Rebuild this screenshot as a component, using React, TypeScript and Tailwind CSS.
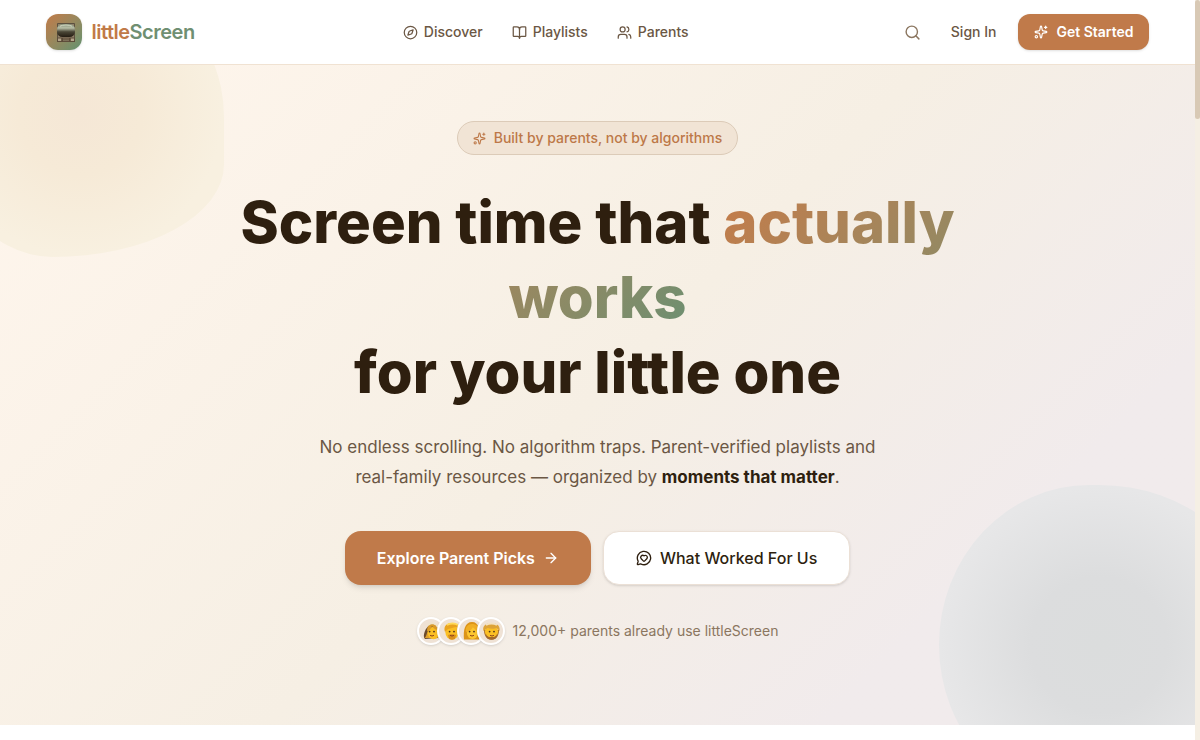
import {
  ArrowRight,
  BookOpen,
  Compass,
  MessageCircleHeart,
  Search,
  Sparkles,
  Users,
  type LucideIcon,
} from "lucide-react";

interface NavItem {
  label: string;
  href: string;
  icon: LucideIcon;
}

const NAV_ITEMS: NavItem[] = [
  { label: "Discover", href: "#discover", icon: Compass },
  { label: "Playlists", href: "#playlists", icon: BookOpen },
  { label: "Parents", href: "#parents", icon: Users },
];

type HairStyle = "bob" | "short" | "long" | "beard";

const PARENTS: HairStyle[] = ["bob", "short", "long", "beard"];

const TvLogo = () => (
  <svg viewBox="0 0 36 36" className="size-9" aria-hidden="true">
    <defs>
      <linearGradient id="tv-screen" x1="0" y1="0" x2="0" y2="1">
        <stop offset="0" stopColor="#7d8a70" />
        <stop offset="0.3" stopColor="#b9c0a8" />
        <stop offset="0.6" stopColor="#4a4636" />
        <stop offset="1" stopColor="#241c12" />
      </linearGradient>
    </defs>
    <path d="M11.5 24V9.5h17V24" stroke="#5c5140" strokeWidth="1" fill="#92826a" />
    <rect x="11" y="10" width="18" height="13" rx="5.5" fill="url(#tv-screen)" />
    <path d="M14 12.2c3-1.6 9-1.6 12 0" stroke="#d5d8c4" strokeWidth="1" fill="none" />
    <rect x="11" y="23.6" width="18" height="4.4" rx="0.6" fill="#5b4a38" />
    <rect x="12" y="24.5" width="3.2" height="2.5" fill="#b3a48a" />
    <rect x="24.8" y="24.5" width="3.2" height="2.5" fill="#b3a48a" />
    <path d="M17 25h6M17 26.6h6" stroke="#8d7d66" strokeWidth="0.8" />
  </svg>
);

const ParentFace = ({ hair }: { hair: HairStyle }) => (
  <svg viewBox="0 0 18 18" className="size-[18px] shrink-0" aria-hidden="true">
    {hair === "bob" && (
      <>
        <path d="M3 17C0 15 3 4 10 2c5 0 7 5 7 9l-1 5z" fill="#6b4a2b" />
        <path d="M2.5 16c2-1 2-5 4-8l2 8z" fill="#e0a02a" />
        <ellipse cx="11.5" cy="11" rx="5.8" ry="6.2" fill="#fbbf24" />
        <path d="M5 9c2 0 4-2 5-5 2 3 4 4 7 4-1-4-4-6-7-6-3 0-5 3-5 7z" fill="#d99a2b" />
        <path d="M6 3c3-3 8-2 10 2" stroke="#f0e4cc" strokeWidth="2" fill="none" />
      </>
    )}
    {hair === "short" && (
      <>
        <ellipse cx="10" cy="10.5" rx="6.6" ry="7" fill="#fbbf24" />
        <path d="M3 10C1 4 5 1 10 1s8 3 7 8c-1-2-2-3-3-4-3 1-5 1-8 2z" fill="#e9a31f" />
        <path d="M5 3c3-2 8-2 11 0" stroke="#ffd95a" strokeWidth="1.8" fill="none" />
        <path d="M6 13c2-1 6-1 8 0l-1 4c-2 1-4 1-6 0z" fill="#d98f1c" />
      </>
    )}
    {hair === "long" && (
      <>
        <path d="M2 17.5C1 8 3 0 10 0s8 8 7 17.5z" fill="#dc9418" />
        <ellipse cx="10.5" cy="11" rx="5.6" ry="6" fill="#fcc630" />
        <path d="M4 10c4-1 6-3 7-5 1 2 3 3 6 5 0-6-3-8-7-8s-7 3-6 8z" fill="#f0ae24" />
      </>
    )}
    {hair === "beard" && (
      <>
        <path d="M2 8c0 6 3 9.8 7.5 9.8S17 14 17 8z" fill="#a3692c" />
        <ellipse cx="9.5" cy="9.6" rx="6.6" ry="6" fill="#fbbf24" />
        <path d="M1.5 9C0 4 4 1 9.5 1s9 3 8 8l-3-3c-2 1-6 1-9 0z" fill="#dda338" />
        <path d="M4 3c3-2 8-2 11 0" stroke="#f3e2c4" strokeWidth="2" fill="none" />
        <path d="M4 12l2 3h7l2-3-1 4c-2 2-7 2-9 0z" fill="#a3692c" />
      </>
    )}
    <circle cx="7.6" cy="9.6" r="0.9" fill="#4b321a" />
    <circle cx="12" cy="9.6" r="0.9" fill="#4b321a" />
    <path d="M8 13.2c1 1 3 1 4 0" stroke="#8a3f1c" strokeWidth="1" fill="none" />
  </svg>
);

const Header = () => (
  <header className="border-b border-[#f0e2d2] bg-white">
    <div className="mx-auto flex h-16 max-w-6xl items-center justify-between px-6">
      <a href="#home" className="flex items-center gap-2.5">
        <span className="rounded-xl bg-linear-135 from-[#c17a48] to-[#5f9270] shadow-sm">
          <TvLogo />
        </span>
        <span className="text-xl font-semibold tracking-tight text-[#c17a48]">
          little<span className="text-[#6f8f72]">Screen</span>
        </span>
      </a>

      <nav className="flex items-center gap-[5px]">
        {NAV_ITEMS.map(({ label, href, icon: Icon }) => (
          <a
            key={label}
            href={href}
            className="flex items-center gap-1.5 px-3 py-2 text-sm font-medium text-[#6b5744]"
          >
            <Icon size={15} />
            {label}
          </a>
        ))}
      </nav>

      <div className="flex items-center gap-1.5">
        <button type="button" aria-label="Search" className="flex size-8 items-center justify-center text-[#8b7660]">
          <Search size={17} />
        </button>
        <a href="#sign-in" className="px-4 py-2 text-sm font-medium text-[#6b5744]">
          Sign In
        </a>
        <button
          type="button"
          className="flex h-9 items-center gap-2 rounded-xl bg-[#c07a4a] px-4 text-sm font-semibold text-white shadow-sm"
        >
          <Sparkles size={14} />
          Get Started
        </button>
      </div>
    </div>
  </header>
);

const Hero = () => (
  <section className="relative overflow-hidden bg-linear-135 from-[#fff6ed] via-[#f6efe4] via-50% to-[#f1ebec] to-80% px-6 pt-14 pb-20">
    {/* soft blobs behind the copy */}
    <div className="absolute -top-24 -left-16 size-72 rounded-[34%_57%_65%_44%/51%_56%_35%_57%] bg-radial from-[#f5e7d6] via-[#f6ead7] via-30% to-[#f8f0e0] to-70%" />
    <div className="absolute -right-16 -bottom-20 size-80 rounded-[47%_50%_50%_47%/50%_42%_50%_50%] bg-radial from-[#dbdddd] via-[#dcddde] via-30% to-[#e7e7e8] to-70%" />

    <div className="relative mx-auto flex max-w-3xl flex-col items-center text-center">
      <div className="flex items-center gap-2 rounded-full border border-[#dccbb8] bg-[#f1e4d5] px-[15px] py-1.5 text-sm font-medium text-[#bd7848]">
        <Sparkles size={13} />
        Built by parents, not by algorithms
      </div>

      <h1 className="mt-[30px] text-[58px] leading-[75px] font-extrabold text-[#2e1f0f]">
        Screen time that{" "}
        <span className="bg-linear-135 from-[#c67b48] to-[#6b8f71] bg-clip-text text-transparent">
          actually works
        </span>
        <br />
        for your little one
      </h1>

      <p className="mt-[22px] max-w-xl text-[17px] leading-[30px] text-[#6b5744]">
        No endless scrolling. No algorithm traps. Parent-verified playlists and real-family resources — organized by{" "}
        <strong className="font-bold text-[#2e1f0f]">moments that matter</strong>.
      </p>

      <div className="mt-[39px] flex gap-3">
        <button
          type="button"
          className="flex h-[54px] items-center gap-2 rounded-2xl bg-[#c07a4a] px-8 font-semibold text-white shadow-md"
        >
          Explore Parent Picks
          <ArrowRight size={16} />
        </button>
        <button
          type="button"
          className="flex h-[54px] items-center gap-2 rounded-2xl border border-[#ebe0d6] bg-white px-8 font-medium text-[#2e1f0f] shadow-sm"
        >
          <MessageCircleHeart size={16} />
          What Worked For Us
        </button>
      </div>

      <div className="mt-8 flex items-center gap-2">
        <div className="flex -space-x-2">
          {PARENTS.map((hair) => (
            <span
              key={hair}
              className="flex size-7 items-center justify-center rounded-full border-2 border-white bg-[#efe2d5] shadow-sm"
            >
              <ParentFace hair={hair} />
            </span>
          ))}
        </div>
        <span className="text-sm text-[#8b7660]">12,000+ parents already use littleScreen</span>
      </div>
    </div>
  </section>
);

const App = () => (
  <div className="flex min-h-screen bg-white font-['Inter',sans-serif]">
    <div className="min-w-0 flex-1">
      <Header />
      <main>
        <Hero />
      </main>
    </div>
    <div className="w-[5px] shrink-0 bg-[#f5efe4]" aria-hidden="true">
      <div className="h-[119px] rounded-full bg-[#d8c9b5]" />
    </div>
  </div>
);

export default App;
